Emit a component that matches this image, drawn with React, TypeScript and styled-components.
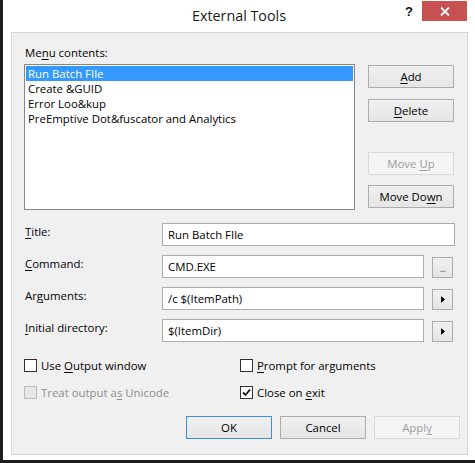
import React from "react";
import styled, { createGlobalStyle, css } from "styled-components";

const FONT = `"Open Sans", "Noto Sans", "DejaVu Sans", sans-serif`;

const Global = createGlobalStyle`
  *, *::before, *::after { box-sizing: border-box; }
  html, body { margin: 0; padding: 0; background: #1e1e1e; }
  body { font-family: ${FONT}; }
`;

const Window = styled.div`
  width: 475px;
  height: 463px;
  border-left: 3px solid #1e1e1e;
  border-bottom: 3px solid #1e1e1e;
  background: #ffffff;
  display: flex;
  flex-direction: column;
`;

const TitleBar = styled.div`
  height: 32px;
  flex: none;
  display: grid;
  grid-template-columns: 1fr auto 1fr;
  align-items: start;
`;

const Title = styled.div`
  grid-column: 2;
  padding-top: 6px;
  font-size: 14.3px;
  line-height: 20px;
  color: #1a1a1a;
`;

const Caption = styled.div`
  grid-column: 3;
  justify-self: end;
  display: flex;
  align-items: flex-start;
  padding-right: 8px;
`;

const HelpButton = styled.div`
  width: 26px;
  height: 20px;
  margin-top: 1px;
  display: flex;
  align-items: center;
  justify-content: center;
  font-family: "Liberation Sans", Arial, sans-serif;
  font-weight: bold;
  font-size: 13px;
  color: #111;
`;

const CloseButton = styled.div`
  width: 45px;
  height: 20px;
  margin-top: 1px;
  background: #c75050;
  display: flex;
  align-items: center;
  justify-content: center;
`;

const Panel = styled.div`
  flex: none;
  height: 423px;
  margin: 0 7px 5px 8px;
  border: 1px solid #d6d6d6;
  background: #f0f0f0;
  padding: 12px 0 0 12px;
  font-size: 11.4px;
  color: #000;
  display: flex;
  flex-direction: column;
`;

const Key = styled.span`
  text-decoration: underline;
  text-underline-offset: 2px;
  text-decoration-thickness: 1px;
`;

const TopSection = styled.div`
  display: grid;
  grid-template-columns: 331px 86px;
  column-gap: 13px;
`;

const SectionLabel = styled.div`
  grid-column: 1 / span 2;
  line-height: 15px;
  margin-bottom: 4px;
  padding-left: 1px;
`;

const ListBox = styled.div`
  height: 146px;
  border: 1px solid #828790;
  background: #fff;
  padding: 1px;
`;

const ListItem = styled.div<{ $selected?: boolean }>`
  height: 15px;
  line-height: 15px;
  padding-left: 2px;
  white-space: nowrap;
  ${(p) =>
    p.$selected &&
    css`
      background: #3399ff;
      color: #fff;
    `}
`;

const SideButtons = styled.div`
  display: flex;
  flex-direction: column;
  justify-content: space-between;
  padding: 1px 0 2px;
`;

const ButtonGroup = styled.div<{ $gap: number }>`
  display: flex;
  flex-direction: column;
  gap: ${(p) => p.$gap}px;
`;

const Button = styled.button<{ $default?: boolean }>`
  width: 86px;
  height: 23px;
  padding: 0;
  margin: 0;
  font-family: ${FONT};
  font-size: 11.4px;
  color: #000;
  border: 1px solid ${(p) => (p.$default ? "#3c8fe0" : "#acacac")};
  background: linear-gradient(#f0f0f0, #e5e5e5);
  &:disabled {
    border-color: #d9d9d9;
    background: #f4f4f4;
    color: #9c9c9c;
  }
`;

const Fields = styled.div`
  margin-top: 13px;
  display: grid;
  grid-template-columns: 130px 262px 21px;
  grid-auto-rows: 23px;
  column-gap: 8px;
  row-gap: 9px;
`;

const FieldLabel = styled.label`
  align-self: start;
  padding: 1px 0 0 1px;
  line-height: 15px;
  white-space: nowrap;
`;

const TextBox = styled.input<{ $wide?: boolean }>`
  height: 23px;
  border: 1px solid #abadb3;
  background: #fff;
  padding: 0 0 0 5px;
  margin: 0;
  font-family: ${FONT};
  font-size: 11.4px;
  color: #000;
  outline: none;
  ${(p) =>
    p.$wide &&
    css`
      grid-column: 2 / span 2;
      width: calc(100% + 2px);
    `}
`;

const SmallButton = styled.div`
  width: 21px;
  height: 21px;
  align-self: center;
  margin-top: 1px;
  border: 1px solid #acacac;
  background: linear-gradient(#f0f0f0, #e5e5e5);
  display: flex;
  align-items: center;
  justify-content: center;
  font-size: 9px;
  color: #444;
`;

const Dots = styled.span`
  margin-top: 3px;
  letter-spacing: -0.5px;
`;

const Checks = styled.div`
  margin-top: 15px;
  display: grid;
  grid-template-columns: 216px auto;
  grid-auto-rows: 17px;
  row-gap: 10px;
`;

const CheckRow = styled.div<{ $disabled?: boolean }>`
  display: flex;
  align-items: center;
  gap: 4px;
  white-space: nowrap;
  color: ${(p) => (p.$disabled ? "#8d8d8d" : "#000")};
`;

const CheckBox = styled.span<{ $disabled?: boolean }>`
  width: 13px;
  height: 13px;
  flex: none;
  border: 1px solid ${(p) => (p.$disabled ? "#bcbcbc" : "#333")};
  background: ${(p) => (p.$disabled ? "#e6e6e6" : "#fff")};
  display: flex;
  align-items: center;
  justify-content: center;
`;

const Footer = styled.div`
  margin-top: 15px;
  padding-right: 7px;
  display: flex;
  justify-content: flex-end;
  gap: 8px;
`;

const Arrow = () => (
  <svg width="4" height="7" viewBox="0 0 4 7">
    <polygon points="0,0 4,3.5 0,7" fill="#000" />
  </svg>
);

const Check = () => (
  <svg width="9" height="9" viewBox="0 0 9 9">
    <path d="M1 4.5 L3.5 7 L8 1.5" fill="none" stroke="#111" strokeWidth="1.8" />
  </svg>
);

const CloseGlyph = () => (
  <svg width="10" height="9" viewBox="0 0 10 9">
    <path d="M1 0.5 L9 8.5 M9 0.5 L1 8.5" stroke="#fff" strokeWidth="1.8" />
  </svg>
);

export default function App() {
  return (
    <>
      <Global />
      <Window>
        <TitleBar>
          <Title>External Tools</Title>
          <Caption>
            <HelpButton>?</HelpButton>
            <CloseButton>
              <CloseGlyph />
            </CloseButton>
          </Caption>
        </TitleBar>
        <Panel>
          <TopSection>
            <SectionLabel>
              Me<Key>n</Key>u contents:
            </SectionLabel>
            <ListBox>
              <ListItem $selected>Run Batch FIle</ListItem>
              <ListItem>Create &amp;GUID</ListItem>
              <ListItem>Error Loo&amp;kup</ListItem>
              <ListItem>PreEmptive Dot&amp;fuscator and Analytics</ListItem>
            </ListBox>
            <SideButtons>
              <ButtonGroup $gap={11}>
                <Button>
                  <Key>A</Key>dd
                </Button>
                <Button>
                  <Key>D</Key>elete
                </Button>
              </ButtonGroup>
              <ButtonGroup $gap={10}>
                <Button disabled>
                  Move <Key>U</Key>p
                </Button>
                <Button>
                  Move Do<Key>w</Key>n
                </Button>
              </ButtonGroup>
            </SideButtons>
          </TopSection>

          <Fields>
            <FieldLabel>
              <Key>T</Key>itle:
            </FieldLabel>
            <TextBox $wide readOnly value="Run Batch FIle" />

            <FieldLabel>
              <Key>C</Key>ommand:
            </FieldLabel>
            <TextBox readOnly value="CMD.EXE" />
            <SmallButton>
              <Dots>...</Dots>
            </SmallButton>

            <FieldLabel>
              Ar<Key>g</Key>uments:
            </FieldLabel>
            <TextBox readOnly value="/c $(ItemPath)" />
            <SmallButton>
              <Arrow />
            </SmallButton>

            <FieldLabel>
              <Key>I</Key>nitial directory:
            </FieldLabel>
            <TextBox readOnly value="$(ItemDir)" />
            <SmallButton>
              <Arrow />
            </SmallButton>
          </Fields>

          <Checks>
            <CheckRow>
              <CheckBox />
              <span>
                Use <Key>O</Key>utput window
              </span>
            </CheckRow>
            <CheckRow>
              <CheckBox />
              <span>
                <Key>P</Key>rompt for arguments
              </span>
            </CheckRow>
            <CheckRow $disabled>
              <CheckBox $disabled />
              <span>
                Treat output a<Key>s</Key> Unicode
              </span>
            </CheckRow>
            <CheckRow>
              <CheckBox>
                <Check />
              </CheckBox>
              <span>
                Close on <Key>e</Key>xit
              </span>
            </CheckRow>
          </Checks>

          <Footer>
            <Button $default>OK</Button>
            <Button>Cancel</Button>
            <Button disabled>
              Appl<Key>y</Key>
            </Button>
          </Footer>
        </Panel>
      </Window>
    </>
  );
}
